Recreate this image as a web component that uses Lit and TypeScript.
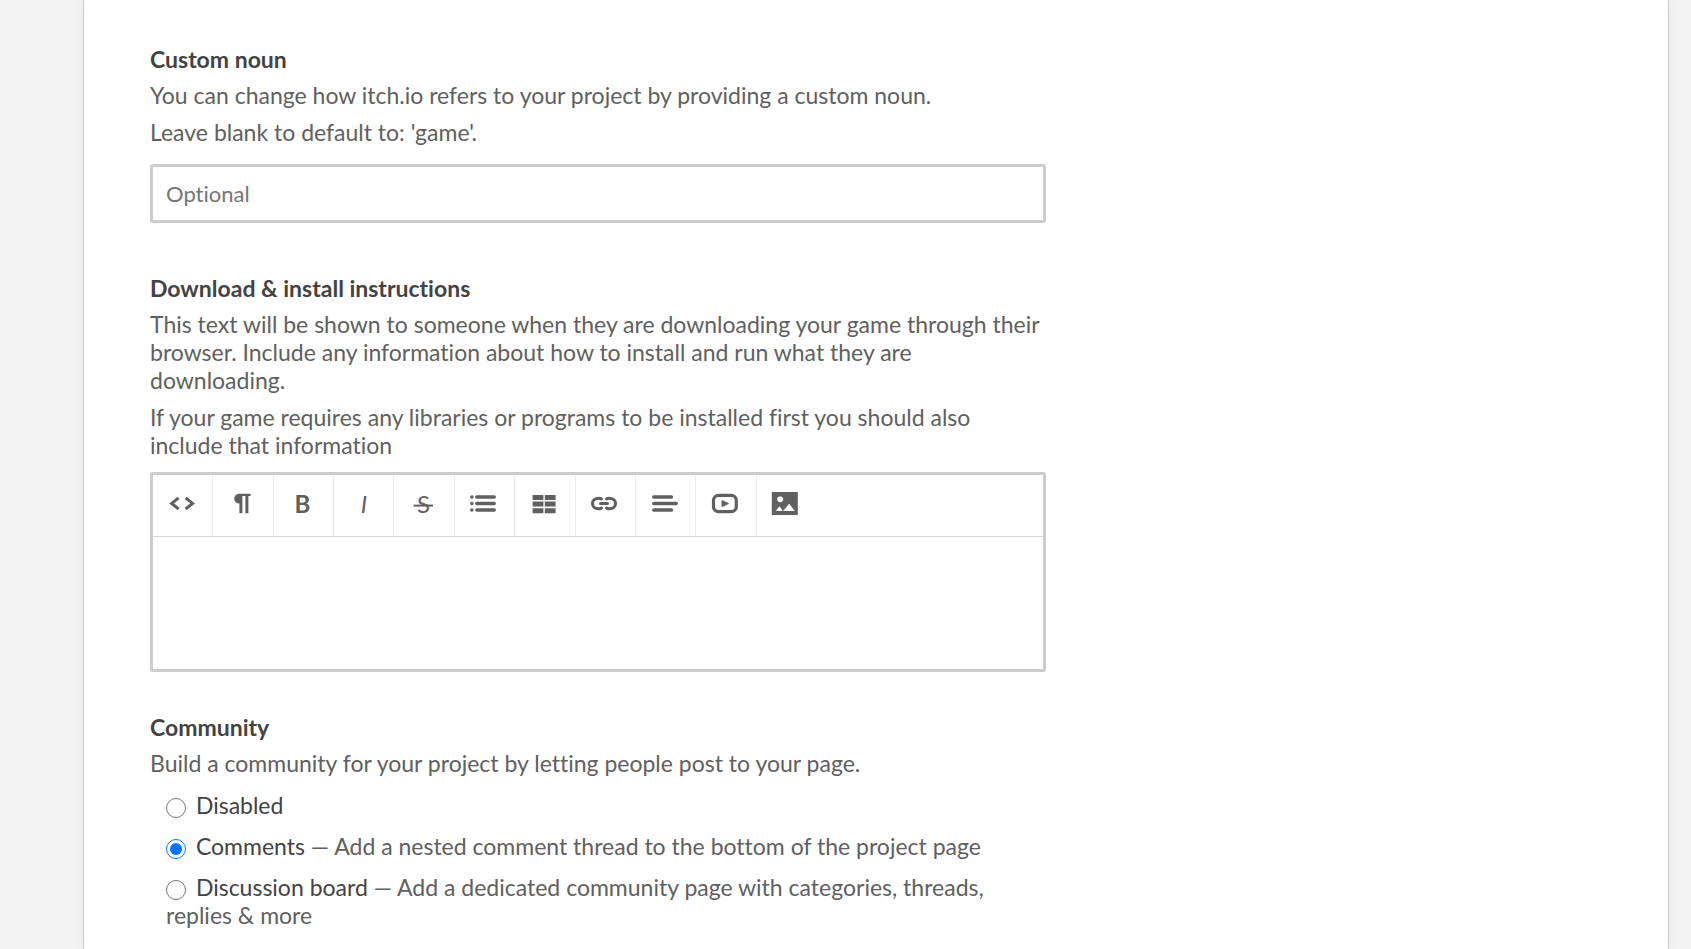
import { LitElement, html, css, svg, TemplateResult } from "lit";
import { customElement, state } from "lit/decorators.js";

interface Tool {
  label: string;
  icon: TemplateResult;
}

const TOOLS: Tool[] = [
  {
    label: "HTML",
    icon: svg`<path d="M10.6 8.8 L3.6 14.4 L10.6 20 M17.6 8.8 L24.6 14.4 L17.6 20" fill="none" stroke="currentColor" stroke-width="3"/>`,
  },
  {
    label: "Format",
    icon: svg`<path d="M12 4.7 H22.5 V7 H20.4 V24.3 H17.4 V7 H14.4 V24.3 H11.4 V14.6 A4.9 4.9 0 0 1 11 4.7 Z" fill="currentColor"/>`,
  },
  {
    label: "Bold",
    icon: svg`<text class="glyph bold" x="14.4" y="24" text-anchor="middle">B</text>`,
  },
  {
    label: "Italic",
    icon: svg`<text class="glyph italic" x="15" y="24" text-anchor="middle">I</text>`,
  },
  {
    label: "Strikethrough",
    icon: svg`<text class="glyph" x="14.4" y="24" text-anchor="middle">S</text><path d="M4.6 16.6 H24" stroke="currentColor" stroke-width="2"/>`,
  },
  {
    label: "Lists",
    icon: svg`<path d="M2.8 8 h.1 M2.8 14.5 h.1 M2.8 21 h.1 M7.8 8 H25.2 M7.8 14.5 H25.2 M7.8 21 H25.2" fill="none" stroke="currentColor" stroke-width="3.5" stroke-linecap="round"/>`,
  },
  {
    label: "Table",
    icon: svg`<path d="M2.6 6h10.8v5H2.6z M14.8 6h10.8v5H14.8z M2.6 12.6h10.8v5H2.6z M14.8 12.6h10.8v5H14.8z M2.6 19.3h10.8v5H2.6z M14.8 19.3h10.8v5H14.8z" fill="currentColor"/>`,
  },
  {
    label: "Link",
    icon: svg`<path d="M11.4 9.9 A5 5 0 0 0 7.6 9.4 A5.1 5.1 0 0 0 7.6 19.6 A5 5 0 0 0 11.4 19.1 M16.6 9.9 A5 5 0 0 1 20.4 9.4 A5.1 5.1 0 0 1 20.4 19.6 A5 5 0 0 1 16.6 19.1 M10.6 14.5 H17.4" fill="none" stroke="currentColor" stroke-width="3" stroke-linecap="round"/>`,
  },
  {
    label: "Align",
    icon: svg`<path d="M2.8 8 H20.4 M2.8 14.5 H25.2 M2.8 21 H20.4" fill="none" stroke="currentColor" stroke-width="3.5" stroke-linecap="round"/>`,
  },
  {
    label: "Video",
    icon: svg`<rect x="2.5" y="6.3" width="22.8" height="16.4" rx="5" fill="none" stroke="currentColor" stroke-width="3.2"/><path d="M11 11.6 L17.4 14.5 L11 17.6 Z" fill="currentColor" stroke="currentColor" stroke-linejoin="round"/>`,
  },
  {
    label: "Image",
    icon: svg`<path fill-rule="evenodd" d="M.8 3 H26.8 V26 H.8 Z M9.2 7.3 a3 3 0 1 0 .01 0 Z M4.6 22 L8.5 17.2 L10.6 20 L11.6 22 Z M12 22 L18.2 14.8 L23.8 22 Z" fill="currentColor"/>`,
  },
];

const OPTIONS = [
  { value: "disabled", name: "Disabled", detail: "" },
  {
    value: "comments",
    name: "Comments",
    detail: "Add a nested comment thread to the bottom of the project page",
  },
  {
    value: "board",
    name: "Discussion board",
    detail: "Add a dedicated community page with categories, threads, replies & more",
  },
];

@customElement("app-root")
export class AppRoot extends LitElement {
  @state() private community = "comments";

  static styles = css`
    :host {
      display: flow-root;
      min-height: 100vh;
      box-sizing: border-box;
      background: #f3f3f3;
      color: #606060;
      font-family: Lato, sans-serif;
      font-size: 23px;
      line-height: 28px;
      font-variant-ligatures: none;
    }
    * {
      box-sizing: border-box;
    }
    .page {
      min-height: 100vh;
      margin: 0 22px 0 83px;
      padding: 45px 66px 18px;
      background: #fff;
      border: solid #ccc;
      border-width: 0 1px;
      box-shadow: 0 0 12px rgba(0, 0, 0, 0.05);
    }
    .form {
      display: flex;
      flex-direction: column;
      gap: 41px;
      max-width: 896px;
    }
    .field {
      margin: 0;
      padding: 0;
      border: 0;
      min-width: 0;
    }
    .title {
      display: block;
      padding: 0;
      color: #434343;
      font-weight: 700;
    }
    p {
      margin: 8px 0 9px;
    }
    p + p {
      margin-top: 9px;
    }
    .text {
      display: block;
      width: 100%;
      height: 59px;
      margin: 18px 0 10px;
      padding: 0 13px;
      border: 3px solid #ccc;
      border-radius: 3px;
      background: #fff;
      color: #434343;
      font: inherit;
      font-size: 22px;
      font-variant-ligatures: none;
    }
    .text::placeholder {
      color: #757575;
    }
    .editor {
      margin-top: 13px;
      border: 3px solid #ccc;
      border-radius: 3px;
    }
    .toolbar {
      border-bottom: 1px solid #d9d9d9;
    }
    .tools {
      display: grid;
      grid-template-columns: repeat(11, 1fr);
      max-width: 664px;
    }
    .tool {
      display: flex;
      justify-content: center;
      align-items: center;
      height: 61px;
      padding: 0 0 4px;
      border: 0;
      border-right: 1px solid #eee;
      background: none;
      color: #606060;
      cursor: pointer;
    }
    .tool:last-child {
      border-right-color: transparent;
    }
    .tool svg {
      width: 30px;
      height: 30px;
      flex: none;
    }
    .glyph {
      font-family: Lato, sans-serif;
      font-size: 24px;
      fill: currentColor;
    }
    .bold {
      font-weight: 700;
    }
    .italic {
      font-style: italic;
    }
    .area {
      display: block;
      width: 100%;
      height: 132px;
      padding: 13px;
      border: 0;
      outline: 0;
      resize: none;
      background: none;
      color: #434343;
      font: inherit;
    }
    .options {
      display: flex;
      flex-direction: column;
      gap: 13px;
      margin: 14px 0 0;
      padding: 0 16px;
      list-style: none;
    }
    .option {
      display: block;
    }
    .radio {
      width: 20px;
      height: 20px;
      margin: 0 4px 0 0;
      vertical-align: -4px;
    }
    .name {
      color: #434343;
    }
  `;

  render() {
    return html`
      <main class="page">
        <form class="form">
          <div class="field">
            <label class="title" for="noun">Custom noun</label>
            <p>You can change how itch.io refers to your project by providing a custom noun.</p>
            <p>Leave blank to default to: 'game'.</p>
            <input class="text" id="noun" type="text" placeholder="Optional" />
          </div>

          <div class="field">
            <label class="title" for="instructions">Download &amp; install instructions</label>
            <p>
              This text will be shown to someone when they are downloading your game through their
              browser. Include any information about how to install and run what they are
              downloading.
            </p>
            <p>
              If your game requires any libraries or programs to be installed first you should also
              include that information
            </p>
            <div class="editor">
              <div class="toolbar">
                <div class="tools" role="toolbar">
                  ${TOOLS.map(
                    (tool) => html`
                      <button class="tool" type="button" aria-label=${tool.label}>
                        <svg viewBox="0 0 30 30" aria-hidden="true">${tool.icon}</svg>
                      </button>
                    `
                  )}
                </div>
              </div>
              <textarea class="area" id="instructions"></textarea>
            </div>
          </div>

          <fieldset class="field">
            <legend class="title">Community</legend>
            <p>Build a community for your project by letting people post to your page.</p>
            <ul class="options">
              ${OPTIONS.map(
                (option) => html`
                  <li>
                    <label class="option">
                      <input
                        class="radio"
                        type="radio"
                        name="community"
                        .checked=${this.community === option.value}
                        @change=${() => (this.community = option.value)}
                      />
                      <span class="name">${option.name}</span>
                      ${option.detail ? `— ${option.detail}` : ""}
                    </label>
                  </li>
                `
              )}
            </ul>
          </fieldset>
        </form>
      </main>
    `;
  }
}
